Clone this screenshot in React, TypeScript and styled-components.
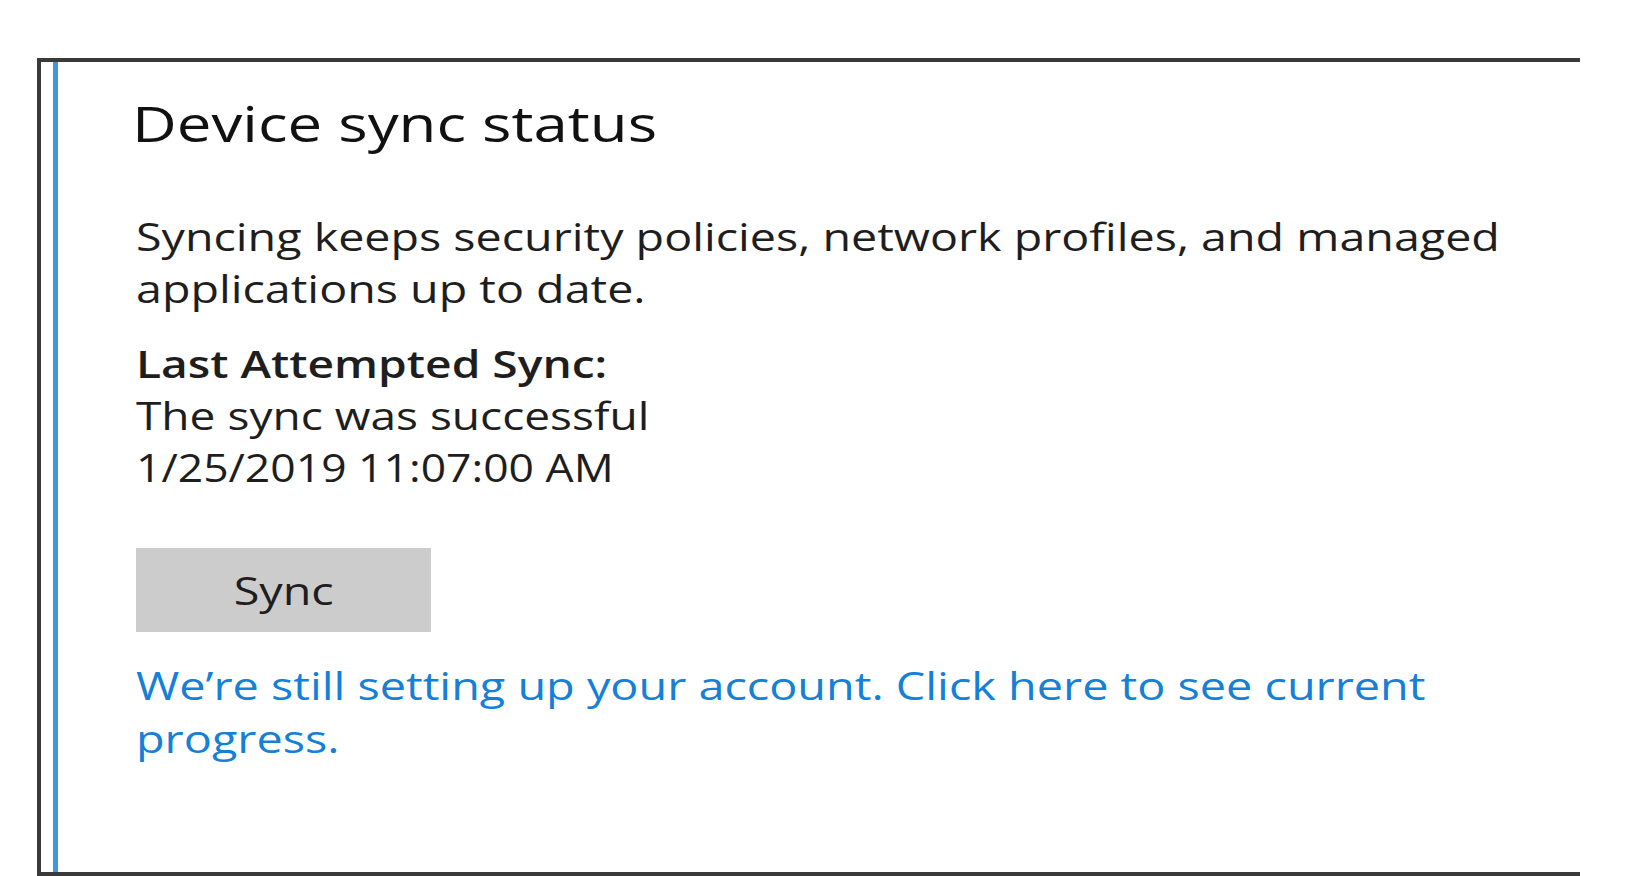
import React from "react";
import styled, { createGlobalStyle, css } from "styled-components";

const Global = createGlobalStyle`
  html, body { margin: 0; padding: 0; background: #ffffff; }
  body { font-family: "Open Sans", "Noto Sans", Arial, sans-serif; color: #1b1b1b; overflow: hidden; }
`;

/* The reference is a horizontally stretched capture; widen the glyphs to match. */
const stretched = (sx: number) => css`
  transform: scaleX(${sx});
  transform-origin: left center;
`;

const Page = styled.div`
  width: 1636px;
  height: 876px;
  padding: 58px 0 0 37px;
  box-sizing: border-box;
`;

const Frame = styled.div`
  width: 1543px;
  height: 818px;
  box-sizing: border-box;
  border-top: 4px solid #3a3a3a;
  border-left: 4px solid #3a3a3a;
  border-bottom: 4px solid #3a3a3a;
  padding-left: 12px;
  display: flex;
`;

const Panel = styled.div`
  flex: 1;
  border-left: 5px solid #3f98de;
  padding: 31px 0 0 74px;
  display: flex;
  flex-direction: column;
  align-items: flex-start;
`;

const Title = styled.h1`
  margin: 0;
  font-size: 50px;
  line-height: 60px;
  font-weight: 400;
  color: #111;
  white-space: nowrap;
  ${stretched(1.235)}
`;

const Text = styled.p<{ $bold?: boolean; $gap: number; $sx: number }>`
  margin: ${(p) => p.$gap}px 0 0 4px;
  font-size: 38px;
  line-height: 52px;
  font-weight: ${(p) => (p.$bold ? 600 : 400)};
  color: #1e1e1e;
  white-space: nowrap;
  ${(p) => stretched(p.$sx)}
`;

const SyncButton = styled.button`
  margin: 55px 0 0 4px;
  width: 295px;
  height: 84px;
  border: none;
  background: #cccccc;
  font-family: inherit;
  font-size: 38px;
  color: #1e1e1e;
  padding: 0;
`;

const ButtonLabel = styled.span`
  display: inline-block;
  transform: scaleX(1.23);
`;

const Link = styled.a`
  display: block;
  margin: 27px 0 0 4px;
  font-size: 38px;
  line-height: 53px;
  color: #1580d8;
  text-decoration: none;
  white-space: nowrap;
  ${stretched(1.231)}
`;

export default function App() {
  return (
    <>
      <Global />
      <Page>
        <Frame>
          <Panel>
            <Title>Device sync status</Title>
            <Text $gap={57} $sx={1.227}>
              Syncing keeps security policies, network profiles, and managed
              <br />
              applications up to date.
            </Text>
            <Text $gap={23} $sx={1.214} $bold>
              Last Attempted Sync:
            </Text>
            <Text $gap={0} $sx={1.212}>
              The sync was successful
            </Text>
            <Text $gap={0} $sx={1.17}>
              1/25/2019 11:07:00 AM
            </Text>
            <SyncButton>
              <ButtonLabel>Sync</ButtonLabel>
            </SyncButton>
            <Link href="#">
              We’re still setting up your account. Click here to see current
              <br />
              progress.
            </Link>
          </Panel>
        </Frame>
      </Page>
    </>
  );
}
